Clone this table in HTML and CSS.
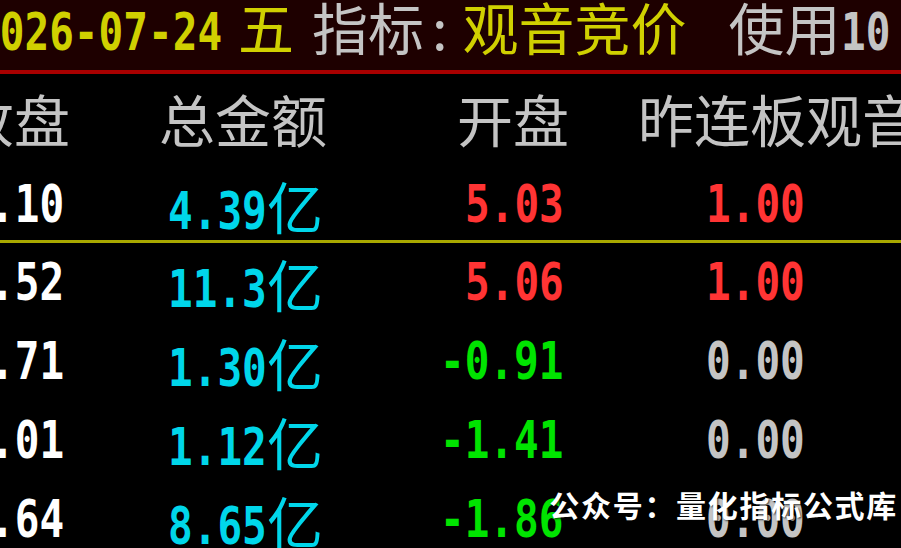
FILE: index.html
```html
<!DOCTYPE html>
<html lang="zh-CN">
<head>
<meta charset="utf-8">
<title>观音竞价</title>
<link rel="stylesheet" href="styles.css">
</head>
<body>
<div class="screen">
  <div class="topbar">
    <div class="date"><span class="num">2026-07-24</span></div>
    <span class="cjk yellow wd">五</span>
    <span class="cjk grey lbl">指标</span><span class="colon grey">:</span>
    <span class="cjk yellow name">观音竞价</span>
    <span class="cjk grey use">使用</span>
    <span class="cnt"><span class="num grey">10</span></span>
  </div>

  <div class="row thead">
    <div class="c c1">收盘</div>
    <div class="c c2">总金额</div>
    <div class="c c3">开盘</div>
    <div class="c c4">昨连板观音竞价</div>
  </div>

  <div class="row data first">
    <div class="c c1"><span class="num white">.10</span></div>
    <div class="c c2"><span class="num cyan">4.39</span><span class="yi">亿</span></div>
    <div class="c c3"><span class="num red">5.03</span></div>
    <div class="c c4"><span class="num red">1.00</span></div>
  </div>
  <div class="sep"></div>
  <div class="row data">
    <div class="c c1"><span class="num white">.52</span></div>
    <div class="c c2"><span class="num cyan">11.3</span><span class="yi">亿</span></div>
    <div class="c c3"><span class="num red">5.06</span></div>
    <div class="c c4"><span class="num red">1.00</span></div>
  </div>
  <div class="row data">
    <div class="c c1"><span class="num white">.71</span></div>
    <div class="c c2"><span class="num cyan">1.30</span><span class="yi">亿</span></div>
    <div class="c c3"><span class="num green">-0.91</span></div>
    <div class="c c4"><span class="num grey">0.00</span></div>
  </div>
  <div class="row data">
    <div class="c c1"><span class="num white">.01</span></div>
    <div class="c c2"><span class="num cyan">1.12</span><span class="yi">亿</span></div>
    <div class="c c3"><span class="num green">-1.41</span></div>
    <div class="c c4"><span class="num grey">0.00</span></div>
  </div>
  <div class="row data">
    <div class="c c1"><span class="num white">.64</span></div>
    <div class="c c2"><span class="num cyan">8.65</span><span class="yi">亿</span></div>
    <div class="c c3"><span class="num green">-1.86</span></div>
    <div class="c c4"><span class="num grey">0.00</span></div>
  </div>

  <div class="watermark">公众号：量化指标公式库</div>
</div>
</body>
</html>
```

FILE: styles.css
```css
html, body {
  margin: 0;
  padding: 0;
  background: #000;
}
.screen {
  position: relative;
  width: 901px;
  height: 548px;
  overflow: hidden;
  background: #000;
  font-family: "Noto Sans CJK SC", sans-serif;
}

.num {
  display: inline-block;
  font-family: "DejaVu Sans Mono", monospace;
  font-weight: bold;
  font-size: 51px;
  white-space: pre;
  transform: scaleX(0.805);
  transform-origin: right center;
}
.cjk {
  font-family: "Noto Sans CJK SC", sans-serif;
  font-size: 56px;
}

.yellow { color: #d0d000; }
.grey { color: #c4c4c4; }
.white { color: #ffffff; }
.cyan { color: #00d6ea; }
.red { color: #ff3434; }
.green { color: #00e400; }

/* top bar */
.topbar {
  display: flex;
  align-items: baseline;
  height: 70px;
  line-height: 52px;
  background: #1e0000;
  border-bottom: 4px solid #a80000;
  white-space: nowrap;
  overflow: hidden;
}
.date {
  flex: none;
  width: 263px;
  margin-left: -25px;
  color: #d0d000;
}
.date .num { transform-origin: left center; }
.wd { margin-left: 0; }
.lbl { margin-left: 18px; }
.colon {
  font-family: "Noto Sans CJK SC", sans-serif;
  font-size: 56px;
  margin-left: 8px;
}
.name { margin-left: 15px; }
.use { margin-left: 42px; }
.cnt { flex: none; width: 60px; }
.cnt .num { transform-origin: left center; }

/* table */
.row {
  display: grid;
  grid-template-columns: 70px 260px 240px 240px 1fr;
}
.c {
  display: flex;
  justify-content: flex-end;
  align-items: baseline;
  white-space: nowrap;
}
.thead {
  height: 94px;
  line-height: 88px;
  font-size: 56px;
  color: #c4c4c4;
}
.thead .c2 { padding-right: 3px; }
.thead .c3 { padding-right: 1px; }
.thead .c4 {
  grid-column: 4 / 6;
  justify-content: flex-start;
  padding-left: 68px;
}

.data {
  height: 79px;
  line-height: 79px;
}
.data.first {
  height: 72px;
  line-height: 74px;
}
.data .c1 { padding-right: 6px; }
.data .c2 { padding-right: 7px; }
.data .c3 { padding-right: 6px; }
.data .c4 { padding-right: 5px; }
.yi {
  font-size: 56px;
  color: #00d6ea;
}
.sep {
  height: 3px;
  background: #a8a800;
}

.watermark {
  position: absolute;
  right: 3px;
  top: 489px;
  font-size: 30px;
  line-height: 30px;
  font-weight: bold;
  letter-spacing: 1.7px;
  color: #fff;
  white-space: nowrap;
  text-shadow: 1px 1px 2px rgba(0, 0, 0, 0.7);
}
```
